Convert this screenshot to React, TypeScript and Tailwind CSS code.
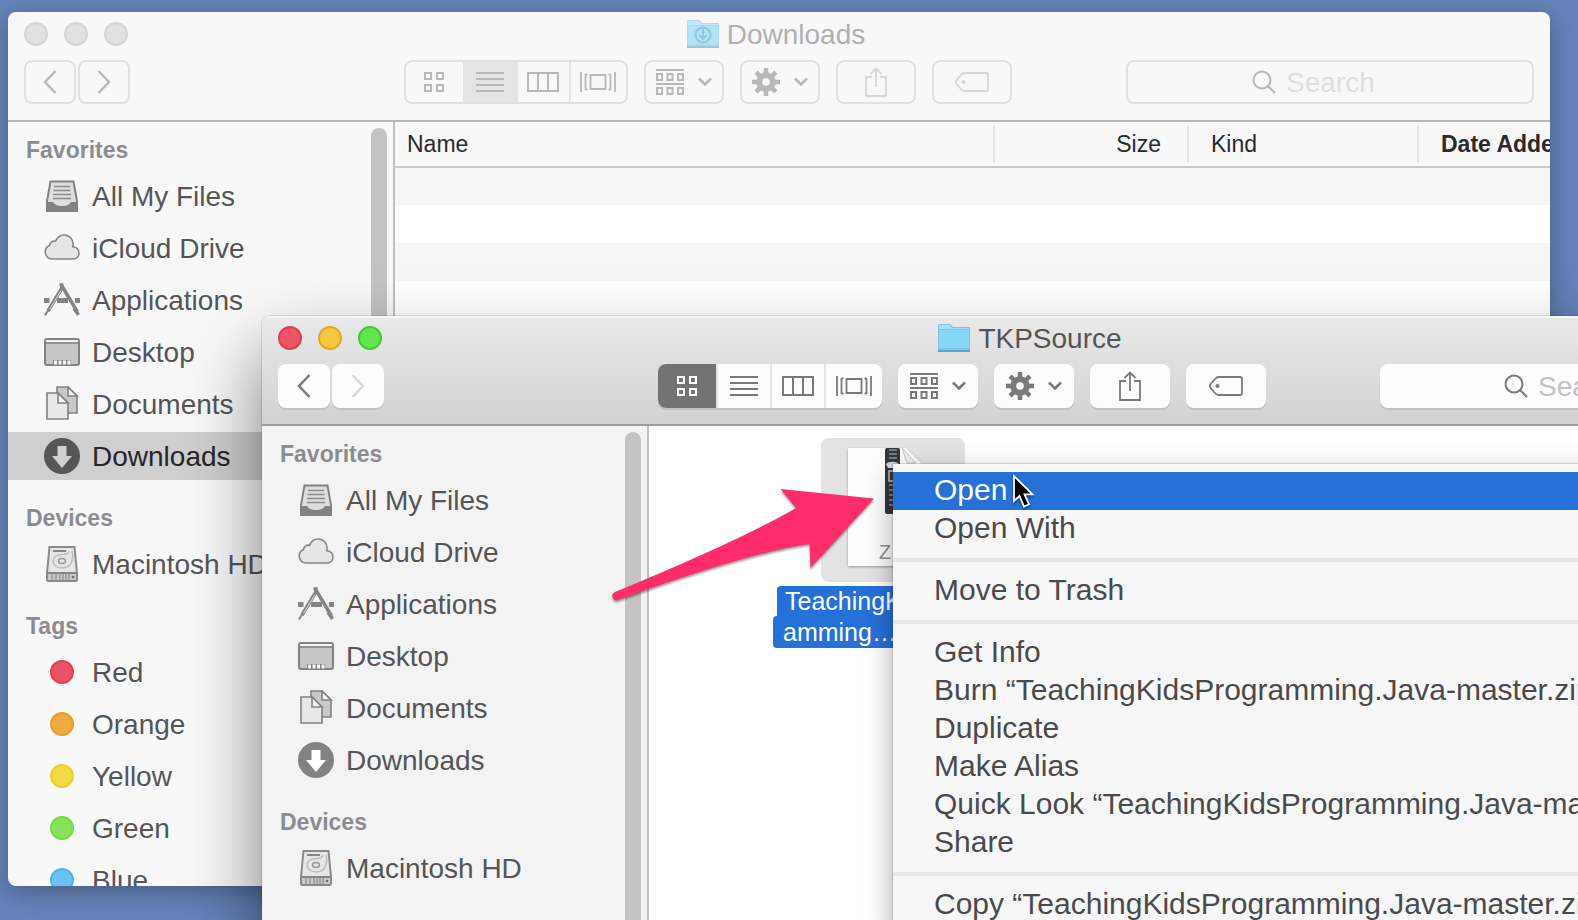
import type { ReactNode } from 'react';
import clsx from 'clsx';

const favorites = [
  { label: 'All My Files', icon: AllFilesIcon },
  { label: 'iCloud Drive', icon: CloudIcon },
  { label: 'Applications', icon: ApplicationsIcon },
  { label: 'Desktop', icon: DesktopIcon },
  { label: 'Documents', icon: DocumentsIcon },
  { label: 'Downloads', icon: DownloadsIcon },
];

const tags = [
  { label: 'Red', color: 'bg-[#ec5265] border-[#e83e50]' },
  { label: 'Orange', color: 'bg-[#eeaa45] border-[#ec9c28]' },
  { label: 'Yellow', color: 'bg-[#f0d942] border-[#ebcf2a]' },
  { label: 'Green', color: 'bg-[#8be05c] border-[#72dc3c]' },
  { label: 'Blue', color: 'bg-[#6bc0f4] border-[#4fb2f0]' },
];

const menuGroups = [
  ['Open', 'Open With'],
  ['Move to Trash'],
  [
    'Get Info',
    'Burn “TeachingKidsProgramming.Java-master.zip” to Disc…',
    'Duplicate',
    'Make Alias',
    'Quick Look “TeachingKidsProgramming.Java-master.zip”',
    'Share',
  ],
  ['Copy “TeachingKidsProgramming.Java-master.zip”'],
];

/* Sidebar icons */

function AllFilesIcon() {
  return (
    <svg viewBox="0 0 36 36" className="w-9 h-9" fill="none">
      <path d="M6.500 3.500h23L33 23v10H3V23z" fill="#dedede" stroke="#828282" strokeWidth="2" />
      <path d="M10 8.500h16M9.500 12.500h17M9 16.500h18M9 20.500h18" stroke="#8a8a8a" strokeWidth="1.600" />
      <path d="M3 24h6c2 3 5 4 9 4s7-1 9-4h6l-1.500 9.500h-27z" fill="#828282" />
    </svg>
  );
}

function CloudIcon() {
  return (
    <svg viewBox="0 0 36 36" className="w-9 h-9">
      <path
        d="M8 29a7 7 0 0 1-2.500-13.400c.3-3.600 3.200-5 6-4.200C13.200 7.200 16.400 5 20 5c5.500 0 9.300 4.300 9 9.500 0 .8-.1 1.500-.3 2.200C32.600 17.200 35 19.800 35 23c0 3.500-2.600 6-6 6z"
        fill="#e6e6e6"
        stroke="#868686"
        strokeWidth="1.600"
      />
    </svg>
  );
}

function ApplicationsIcon() {
  return (
    <svg viewBox="0 0 36 36" className="w-9 h-9" fill="none" stroke="#848484">
      <path d="M0 18.500h5.500M13 18.500h11M31 18.500h5" strokeWidth="5" />
      <path d="M18.500 5L4 29" strokeWidth="3.500" />
      <path d="M17 8.500L5.500 27.500" strokeWidth="1" stroke="#d8d8d8" />
      <path d="M4 28.500L1 33.500" strokeWidth="2" />
      <path d="M17 2.500L33.500 30" strokeWidth="3.500" />
      <path d="M15.500 2.500h4" strokeWidth="2.500" />
      <path d="M30 26.500l4.500 6.500" strokeWidth="3.500" />
    </svg>
  );
}

function DesktopIcon() {
  return (
    <svg viewBox="0 0 36 36" className="w-9 h-9">
      <rect x="1" y="5" width="34" height="26" rx="2" fill="#c6c6c6" stroke="#828282" strokeWidth="2" />
      <path d="M2 6h32v2H2z" fill="#f4f4f4" />
      <path d="M1 9h34" stroke="#828282" strokeWidth="1.500" />
      <path d="M9 26h18v5H9z" fill="#828282" />
      <path d="M10 26.500h3v4h-3zM14.500 26.500h3v4h-3zM19 26.500h3v4h-3zM23.500 26.500h3v4h-3z" fill="#f6f6f6" />
    </svg>
  );
}

function DocumentsIcon() {
  return (
    <svg viewBox="0 0 36 36" className="w-9 h-9" stroke="#828282" strokeWidth="1.600">
      <path d="M13 1h11l9 9v17H13z" fill="#c8c8c8" />
      <path d="M24 1v9h9z" fill="#f2f2f2" />
      <path d="M3 7h11l10 10v16H3z" fill="#e8e8e8" />
      <path d="M14 7v10h10z" fill="#f4f4f4" />
    </svg>
  );
}

function DownloadsIcon({ selected = false }: { selected?: boolean }) {
  return (
    <svg viewBox="0 0 36 36" className="w-9 h-9">
      <circle cx="18" cy="18" r="18" fill={selected ? '#565656' : '#828282'} />
      <path d="M13.500 8h9v10H28L18 30 8 18h5.500z" fill={selected ? '#d0d0d0' : '#ffffff'} />
    </svg>
  );
}

function HardDriveIcon() {
  return (
    <svg viewBox="0 0 36 36" className="w-9 h-9" fill="none">
      <path d="M5.500 1h25L33 27v6.500a1.500 1.500 0 0 1-1.500 1.500h-27A1.500 1.500 0 0 1 3 33.500V27z" fill="#e6e6e6" stroke="#8a8a8a" strokeWidth="2" />
      <path d="M9 5h13" stroke="#858585" strokeWidth="2" />
      <path d="M28 5c1 3 1 7 0 10-1.500 4.500-5 7-10 7s-9-3-9-7 4-6.500 9-6.500c3 0 6-.5 7-3" stroke="#bcbcbc" strokeWidth="1.500" />
      <ellipse cx="18" cy="15" rx="3.500" ry="2.500" stroke="#9a9a9a" strokeWidth="1.500" />
      <path d="M3 27h30" stroke="#858585" strokeWidth="2" />
      <path d="M4 28h28v6H4z" fill="#c9c9c9" />
      <path d="M8 28v6M12 28v6M16 28v6M19 28v6M22 28v6M25 28v6" stroke="#8c8c8c" strokeWidth="1.200" />
      <circle cx="29" cy="31" r="1.300" fill="#6e6e6e" />
    </svg>
  );
}

/* Toolbar icons */

function GridIcon() {
  return (
    <svg viewBox="0 0 20 20" className="w-5 h-5" fill="none" stroke="currentColor" strokeWidth="2">
      <path d="M1 1h6v6H1zM13 1h6v6h-6zM1 13h6v6H1zM13 13h6v6h-6z" />
    </svg>
  );
}

function ListIcon() {
  return (
    <svg viewBox="0 0 28 20" className="w-7 h-5" stroke="currentColor" strokeWidth="2">
      <path d="M0 1h28M0 7h28M0 13h28M0 19h28" />
    </svg>
  );
}

function ColumnsIcon() {
  return (
    <svg viewBox="0 0 32 20" className="w-8 h-5" fill="none" stroke="currentColor" strokeWidth="2">
      <path d="M1 1h30v18H1zM11 1v18M21 1v18" />
    </svg>
  );
}

function CoverFlowIcon() {
  return (
    <svg viewBox="0 0 36 20" className="w-9 h-5" fill="none" stroke="currentColor" strokeWidth="1.800">
      <path d="M1 0v20M5.500 2v16M10.500 3h15v14h-15zM30.500 2v16M35 0v20M5.500 2.500h2M5.500 17.500h2M28.500 2.500h2M28.500 17.500h2" />
    </svg>
  );
}

function ArrangeIcon() {
  return (
    <svg viewBox="0 0 28 26" className="w-7 h-[26px]" fill="none" stroke="currentColor" strokeWidth="2">
      <path d="M0 1h28M0 15h28M1 5h5v6H1zM11.500 5h5v6h-5zM22 5h5v6h-5zM1 19h5v6H1zM11.500 19h5v6h-5zM22 19h5v6h-5z" />
    </svg>
  );
}

function GearIcon() {
  return (
    <svg viewBox="-14 -14 28 28" className="w-7 h-7" fill="none" stroke="currentColor">
      <circle r="6.800" strokeWidth="6" />
      <path d="M0-14v5M0 14V9M-14 0h5M14 0H9M-9.900-9.900l3.500 3.500M9.900 9.900L6.400 6.400M-9.900 9.900l3.500-3.500M9.900-9.900L6.400-6.400" strokeWidth="4.500" />
    </svg>
  );
}

function ChevronDownIcon() {
  return (
    <svg viewBox="0 0 14 10" className="w-3.5 h-2.5" fill="none" stroke="currentColor" strokeWidth="2.500">
      <path d="M1 1.500l6 6 6-6" />
    </svg>
  );
}

function ShareIcon() {
  return (
    <svg viewBox="0 0 22 30" className="w-[22px] h-[30px]" fill="none" stroke="currentColor" strokeWidth="1.800">
      <path d="M7 10H1v19h20V10h-6M11 20V1.500M5.500 7L11 1.500 16.500 7" />
    </svg>
  );
}

function TagIcon() {
  return (
    <svg viewBox="0 0 34 20" className="w-[34px] h-5" fill="none" stroke="currentColor" strokeWidth="1.800">
      <path d="M10 1h21a2 2 0 0 1 2 2v14a2 2 0 0 1-2 2H10c-2 0-3-.8-4-2l-4-4.500c-1.300-1.500-1.300-3.500 0-5L6 3c1-1.200 2-2 4-2z" />
      <circle cx="8.500" cy="10" r="2" fill="currentColor" stroke="none" />
    </svg>
  );
}

function SearchIcon() {
  return (
    <svg viewBox="0 0 24 24" className="w-6 h-6 shrink-0" fill="none" stroke="currentColor" strokeWidth="2">
      <circle cx="10" cy="10" r="8.500" />
      <path d="M16 16l7 7" />
    </svg>
  );
}

function FolderIcon({ active, download }: { active: boolean; download: boolean }) {
  return (
    <svg viewBox="0 0 32 28" className={clsx('w-8 h-7', !active && 'opacity-60')}>
      <path d="M0 1.500A1.500 1.500 0 0 1 1.500 0h11L15 3h17v23H0z" fill="#7cc4e6" />
      <path d="M1 1h11l2.500 3H31v1H1z" fill="#a5e0f8" />
      <path d="M1 6h30v18H1z" fill="#86d6f8" />
      <path d="M0 26h32v2H0z" fill="#5fa5c6" />
      {download && (
        <g fill="none" stroke="#4ba6d4" strokeWidth="2">
          <circle cx="16" cy="15" r="7.500" />
          <path d="M16 9v9M12.500 15l3.500 4 3.500-4" />
        </g>
      )}
    </svg>
  );
}

function NavChevron({ d }: { d: string }) {
  return (
    <svg viewBox="0 0 14 24" className="w-3.5 h-6" fill="none" stroke="currentColor" strokeWidth="2.500">
      <path d={d} />
    </svg>
  );
}

/* Window parts */

type ButtonProps = { active: boolean; label: string; className?: string; children: ReactNode };

function ToolbarButton({ active, label, className, children }: ButtonProps) {
  return (
    <button
      type="button"
      aria-label={label}
      className={clsx(
        'h-11 flex items-center justify-center rounded-lg shrink-0',
        active ? 'bg-[#fcfcfc] shadow-[0_2px_0_#c2c2c2]' : 'border-2 border-[#e0e0e0]',
        className,
      )}
    >
      {children}
    </button>
  );
}

function Toolbar({ active, title }: { active: boolean; title: string }) {
  const lights = active
    ? ['bg-[#ed5466] border-[#d8414f]', 'bg-[#f6c83c] border-[#dfa825]', 'bg-[#5fe84e] border-[#46c736]']
    : ['bg-[#e1e1e1] border-[#d5d5d5]', 'bg-[#e1e1e1] border-[#d5d5d5]', 'bg-[#e1e1e1] border-[#d5d5d5]'];
  const views = [
    { label: 'Icons', icon: GridIcon, width: 'w-[60px]' },
    { label: 'List', icon: ListIcon, width: 'w-[54px]' },
    { label: 'Columns', icon: ColumnsIcon, width: 'w-[54px]' },
    { label: 'Cover Flow', icon: CoverFlowIcon, width: 'w-14' },
  ];
  const current = active ? 'Icons' : 'List';

  return (
    <header
      className={clsx(
        'px-4 pb-4 border-b-2 shrink-0',
        active
          ? 'bg-linear-to-b from-[#e9e9e9] to-[#d2d2d2] border-[#9c9c9c] text-[#7a7a7a] shadow-[inset_0_2px_0_#f6f6f6]'
          : 'bg-[#f8f8f8] border-[#b6b6b6] text-[#b8b8b8]',
      )}
    >
      <div className="h-11 grid grid-cols-[1fr_auto_1fr] items-center">
        <div className="flex gap-4">
          {['Close', 'Minimize', 'Zoom'].map((name, i) => (
            <button key={name} type="button" aria-label={name} className={clsx('size-6 rounded-full border-2', lights[i])} />
          ))}
        </div>
        <div className="flex items-center gap-2 pr-1.5">
          <FolderIcon active={active} download={!active} />
          <h1 className={clsx('pt-0.5 text-[28px] leading-8', active ? 'text-[#545458]' : 'text-[#b0b0b2]')}>{title}</h1>
        </div>
      </div>
      <div className="mt-1 flex items-center">
        <div className="flex gap-0.5">
          <ToolbarButton active={active} label="Back" className="w-[52px]">
            <NavChevron d="M12.500 1L2 12l10.500 11" />
          </ToolbarButton>
          <ToolbarButton active={active} label="Forward" className={clsx('w-[52px]', active && 'text-[#d8d8d8]')}>
            <NavChevron d="M1.500 1L12 12 1.500 23" />
          </ToolbarButton>
        </div>
        <div className="flex-[12]" />
        <div className="flex gap-4">
          <div
            className={clsx(
              'w-56 h-11 flex rounded-lg overflow-hidden',
              active ? 'bg-[#fcfcfc] shadow-[0_2px_0_#c2c2c2]' : 'border-2 border-[#e0e0e0]',
            )}
          >
            {views.map((view) => (
              <button
                key={view.label}
                type="button"
                aria-label={view.label}
                aria-pressed={view.label === current}
                className={clsx(
                  'flex items-center justify-center border-r-2 border-[#e4e4e4] last:border-r-0',
                  view.width,
                  view.label === current && (active ? 'bg-[#737373] text-white border-[#737373]' : 'bg-[#e4e4e4]'),
                )}
              >
                <view.icon />
              </button>
            ))}
          </div>
          <ToolbarButton active={active} label="Arrange" className="w-20 gap-3.5">
            <ArrangeIcon />
            <ChevronDownIcon />
          </ToolbarButton>
          <ToolbarButton active={active} label="Action" className="w-20 gap-3.5">
            <GearIcon />
            <ChevronDownIcon />
          </ToolbarButton>
          <ToolbarButton active={active} label="Share" className={clsx('w-20', !active && 'text-[#d6d6d6]')}>
            <ShareIcon />
          </ToolbarButton>
          <ToolbarButton active={active} label="Edit Tags" className={clsx('w-20', !active && 'text-[#d6d6d6]')}>
            <TagIcon />
          </ToolbarButton>
        </div>
        <div className="flex-[5]" />
        <label
          className={clsx(
            'w-[408px] h-11 pl-[124px] flex items-center gap-2.5 rounded-lg',
            active ? 'bg-[#fcfcfc] shadow-[0_2px_0_#c2c2c2]' : 'border-2 border-[#e0e0e0]',
          )}
        >
          <SearchIcon />
          <input
            type="text"
            aria-label="Search"
            placeholder="Search"
            className={clsx(
              'min-w-0 flex-1 pt-0.5 bg-transparent outline-none text-[28px] leading-8',
              active ? 'placeholder:text-[#c2c2c6]' : 'placeholder:text-[#dedee0]',
            )}
          />
        </label>
      </div>
    </header>
  );
}

function SidebarHeading({ children }: { children: ReactNode }) {
  return <h2 className="h-10 pl-[18px] text-[23px] leading-10 font-bold text-[#8c8c90]">{children}</h2>;
}

function SidebarItem({ label, selected = false, children }: { label: string; selected?: boolean; children: ReactNode }) {
  return (
    <li className="py-0.5">
      <button
        type="button"
        className={clsx(
          'w-full h-12 pl-9 flex items-center gap-3 text-[28px] leading-8 whitespace-nowrap',
          selected ? 'bg-[#cfcfcf] text-[#262628]' : 'text-[#555558]',
        )}
      >
        <span className="w-9 flex justify-center">{children}</span>
        <span className="pt-0.5">{label}</span>
      </button>
    </li>
  );
}

function Sidebar({ active }: { active: boolean }) {
  return (
    <aside
      className={clsx(
        'w-[387px] shrink-0 flex border-r-2 border-[#c0c0c0] overflow-hidden',
        active ? 'bg-[#f3f3f3]' : 'bg-[#f8f8f8]',
      )}
    >
      <nav className="flex-1 pt-2">
        <SidebarHeading>Favorites</SidebarHeading>
        <ul className="mb-4">
          {favorites.map((item) => {
            const selected = !active && item.label === 'Downloads';
            return (
              <SidebarItem key={item.label} label={item.label} selected={selected}>
                <item.icon selected={selected} />
              </SidebarItem>
            );
          })}
        </ul>
        <SidebarHeading>Devices</SidebarHeading>
        <ul className="mb-4">
          <SidebarItem label="Macintosh HD">
            <HardDriveIcon />
          </SidebarItem>
        </ul>
        {!active && (
          <>
            <SidebarHeading>Tags</SidebarHeading>
            <ul>
              {tags.map((tag) => (
                <SidebarItem key={tag.label} label={tag.label}>
                  <span className={clsx('size-6 rounded-full border-2', tag.color)} />
                </SidebarItem>
              ))}
            </ul>
          </>
        )}
      </nav>
      <div className="w-4 mt-1.5 mr-1.5 rounded-t-full bg-[#c3c3c3]" />
    </aside>
  );
}

function FinderWindow({ active, title, className, children }: { active: boolean; title: string; className: string; children: ReactNode }) {
  return (
    <section className={clsx('absolute flex flex-col rounded-lg overflow-hidden', className)}>
      <Toolbar active={active} title={title} />
      <div className="flex-1 min-h-0 flex">
        <Sidebar active={active} />
        <div className="flex-1 min-w-0 bg-white overflow-hidden">{children}</div>
      </div>
    </section>
  );
}

function FileList() {
  return (
    <table className="w-full table-fixed border-collapse text-[23px] leading-9 text-[#2a2a2c]">
      <thead>
        <tr className="h-[45px] bg-[#f8f8f8] border-b-2 border-[#cacaca] text-left">
          <th className="p-0 font-normal">
            <div className="pl-3 border-r-2 border-[#e2e2e2]">Name</div>
          </th>
          <th className="p-0 w-[194px] font-normal">
            <div className="pr-[26px] text-right border-r-2 border-[#e2e2e2]">Size</div>
          </th>
          <th className="p-0 w-[230px] font-normal">
            <div className="pl-[22px] border-r-2 border-[#e2e2e2]">Kind</div>
          </th>
          <th className="p-0 w-[131px] font-bold">
            <div className="pl-[22px] overflow-hidden whitespace-nowrap">Date Added</div>
          </th>
        </tr>
      </thead>
      <tbody>
        {Array.from({ length: 18 }, (_, i) => (
          <tr key={i} className="h-[38px] odd:bg-[#f6f6f6]">
            <td colSpan={4} className="p-0" />
          </tr>
        ))}
      </tbody>
    </table>
  );
}

function ZipFile() {
  return (
    <figure className="w-60 ml-[124px] pt-3">
      <div className="size-36 mx-auto pt-[9px] rounded-lg bg-[#e3e3e3] flex items-start justify-center">
        <svg viewBox="0 0 92 120" className="w-[92px] h-[120px] drop-shadow-[0_1px_1px_rgba(0,0,0,0.35)]">
          <path d="M1 1h58l32 32v86H1z" fill="#fdfdfd" />
          <path d="M55 1l14 15H60z" fill="#f0f0f0" stroke="#c4c4c4" />
          <rect x="38" y="1" width="15" height="66" rx="2" fill="#34363a" />
          <path d="M42 3h8M42 7h8M42 11h8M42 38h8M42 43h8M42 48h8M42 53h8M42 58h8" stroke="#8d9299" strokeWidth="1.500" />
          <path d="M39 17c3-3 10-3 13 0l-3 4h-8z" fill="#cfdbe2" />
          <path d="M42 24h7v10h-7z" fill="none" stroke="#b9bec4" strokeWidth="1.500" />
          <text x="32" y="112" fontSize="20" fill="#909090">ZIP</text>
        </svg>
      </div>
      <figcaption className="mt-1 flex flex-col items-start text-[25px] text-white whitespace-nowrap">
        <span className="ml-1 px-2 h-[30px] leading-[30px] rounded-t bg-[#2670da]">TeachingKidsProgr</span>
        <span className="pl-2.5 pr-2 h-8 leading-8 rounded bg-[#2670da]">amming…aster.zip</span>
      </figcaption>
    </figure>
  );
}

function ContextMenu() {
  return (
    <div
      role="menu"
      className="absolute left-[893px] top-[464px] w-[820px] py-2 bg-[#f7f7f7] rounded-tr-lg shadow-[0_0_0_1px_rgba(0,0,0,0.12),0_10px_28px_rgba(0,0,0,0.35)]"
    >
      {menuGroups.map((group, i) => (
        <div key={group[0]}>
          {i > 0 && <hr className="my-2.5 border-0 h-1 bg-[#e7e7e7]" />}
          {group.map((item) => (
            <button
              key={item}
              type="button"
              role="menuitem"
              className={clsx(
                'block w-full h-[38px] pl-[41px] pb-0.5 text-left text-[30px] leading-9 whitespace-nowrap',
                item === 'Open' ? 'bg-[#2670da] text-white' : 'text-[#4a4a4d]',
              )}
            >
              {item}
            </button>
          ))}
        </div>
      ))}
    </div>
  );
}

function PointerArrow() {
  return (
    <svg
      viewBox="0 0 276 130"
      className="absolute left-[606px] top-[480px] w-[276px] h-[130px] drop-shadow-[0_2px_1px_rgba(0,0,0,0.4)]"
    >
      <path d="M9 112Q135 60 190 28L174.500 9 268 18.500 204.500 88l-1-24Q140 73 12 120c-5 1.500-8-6-3-8z" fill="#ff2d6c" />
    </svg>
  );
}

function MouseCursor() {
  return (
    <svg viewBox="0 0 24 36" className="absolute left-[1012px] top-[474px] w-6 h-9 drop-shadow-[0_2px_1px_rgba(0,0,0,0.4)]">
      <path d="M2 2v25l5.500-5 4.500 10.500 5-2.200-4.500-10h8z" fill="#000" stroke="#fff" strokeWidth="1.800" />
    </svg>
  );
}

export default function App() {
  return (
    <main className="relative h-screen overflow-hidden bg-[#6583ba] font-['Liberation_Sans',Arial,sans-serif]">
      <FinderWindow
        active={false}
        title="Downloads"
        className="left-2 right-7 top-3 bottom-[34px] shadow-[0_6px_24px_rgba(0,0,0,0.3)]"
      >
        <FileList />
      </FinderWindow>
      <FinderWindow
        active
        title="TKPSource"
        className="left-[262px] top-[316px] w-[calc(100%-36px)] h-[calc(100%-46px)] shadow-[0_0_0_1px_rgba(0,0,0,0.1),0_36px_72px_rgba(0,0,0,0.5)]"
      >
        <ZipFile />
      </FinderWindow>
      <ContextMenu />
      <PointerArrow />
      <MouseCursor />
    </main>
  );
}
